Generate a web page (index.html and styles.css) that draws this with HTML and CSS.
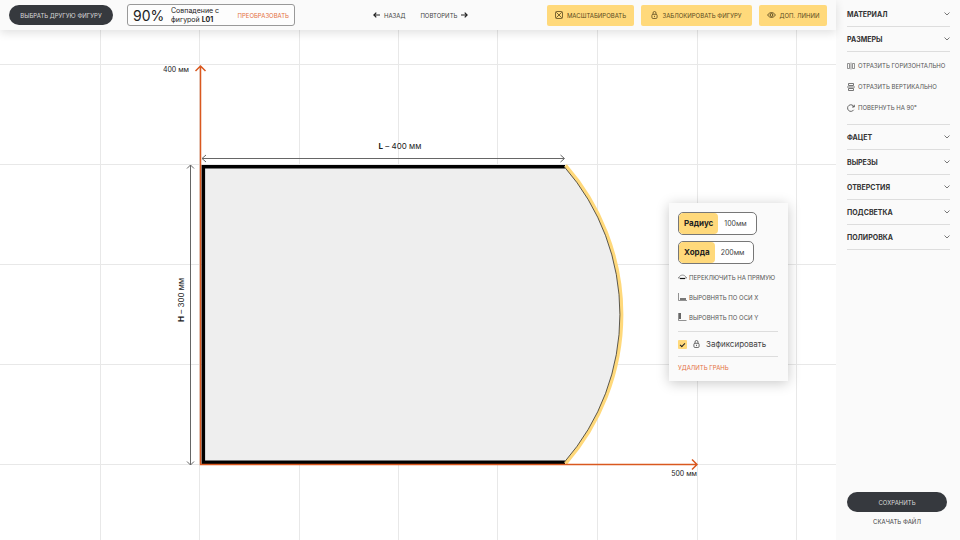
FILE: index.html
```html
<!DOCTYPE html>
<html lang="ru">
<head>
<meta charset="utf-8">
<title>Редактор фигуры</title>
<link rel="stylesheet" href="styles.css">
</head>
<body>
<main class="workspace">
  <header class="toolbar">
    <button class="pill pill-choose">ВЫБРАТЬ ДРУГУЮ ФИГУРУ</button>
    <div class="match">
      <span class="match-value">90%</span>
      <span class="match-text">Совпадение с<br>фигурой <b>L01</b></span>
      <button class="link-accent">ПРЕОБРАЗОВАТЬ</button>
    </div>
    <div class="history">
      <button class="plain"><svg width="7" height="6" viewBox="0 0 7 6"><path d="M7 3H1M3.3.6.9 3l2.4 2.4" fill="none" stroke="#222" stroke-width="1.2"/></svg>НАЗАД</button>
      <button class="plain">ПОВТОРИТЬ<svg width="7" height="6" viewBox="0 0 7 6"><path d="M0 3h6M3.7.6 6.1 3 3.7 5.4" fill="none" stroke="#222" stroke-width="1.2"/></svg></button>
    </div>
    <div class="tools">
      <button class="tool tool-scale"><svg width="8" height="8" viewBox="0 0 8 8"><rect x=".5" y=".5" width="7" height="7" rx="1" fill="none" stroke="#5a4a20" stroke-width=".8"/><path d="M1.200 1.200l5.600 5.600M6.800 1.200 1.200 6.800" fill="none" stroke="#5a4a20" stroke-width=".8"/></svg>МАСШТАБИРОВАТЬ</button>
      <button class="tool tool-lock"><svg width="7" height="8" viewBox="0 0 7 8"><rect x=".9" y="3.3" width="5.2" height="4.2" rx="1.2" fill="none" stroke="#5a4a20" stroke-width=".8"/><path d="M2 3.3V2a1.5 1.5 0 0 1 3 0v1.3M3.5 4.8v1.3" fill="none" stroke="#5a4a20" stroke-width=".8"/></svg>ЗАБЛОКИРОВАТЬ ФИГУРУ</button>
      <button class="tool tool-lines"><svg width="9" height="8" viewBox="0 0 9 8"><path d="M.5 4Q4.5-1 8.5 4 4.5 9 .5 4z" fill="none" stroke="#5a4a20" stroke-width=".9"/><circle cx="4.5" cy="4" r="1.4" fill="none" stroke="#5a4a20"/></svg>ДОП. ЛИНИИ</button>
    </div>
  </header>

  <section class="canvas">
    <svg class="drawing" width="100%" height="100%">
      <g class="grid">
        <line x1="0" x2="100%" y1="34.5" y2="34.5"/><line x1="0" x2="100%" y1="134.5" y2="134.5"/><line x1="0" x2="100%" y1="234.5" y2="234.5"/><line x1="0" x2="100%" y1="334.5" y2="334.5"/><line x1="0" x2="100%" y1="434.5" y2="434.5"/>
        <line x1="100.5" x2="100.5" y1="0" y2="100%"/><line x1="199.5" x2="199.5" y1="0" y2="100%"/><line x1="299.5" x2="299.5" y1="0" y2="100%"/><line x1="398.5" x2="398.5" y1="0" y2="100%"/><line x1="497.5" x2="497.5" y1="0" y2="100%"/><line x1="597.5" x2="597.5" y1="0" y2="100%"/><line x1="697.5" x2="697.5" y1="0" y2="100%"/><line x1="796.5" x2="796.5" y1="0" y2="100%"/>
      </g>
      <path d="M203 136H565A226 226 0 0 1 565 433H203z" fill="#eee"/>
      <path d="M565 136.8H203.3V432.3H565" fill="none" stroke="#000" stroke-width="3.6"/>
      <path d="M565.500 135.500A226 226 0 0 1 565.500 433.500" fill="none" stroke="#ffd97b" stroke-width="3.6"/>
      <path d="M564.500 137A224 224 0 0 1 564.500 432" fill="none" stroke="#333" stroke-width=".8"/>
      <path d="M200.5 36V434.5H697M195.5 41l5-5 5 5M692 429.5l5 5-5 5" fill="none" stroke="#d9581f" stroke-width="1.5"/>
      <path d="M202 128.5H564M206 125l-4 3.500 4 3.500M560.500 125l4 3.500-4 3.500M190.500 135V435M187 138.500l3.500-3.500 3.500 3.500M187 431.500l3.500 3.500 3.500-3.500" fill="none" stroke="#666" stroke-width="1"/>
      <text class="axis" x="189" y="42" text-anchor="end">400 мм</text>
      <text class="axis" x="697" y="446" text-anchor="end">500 мм</text>
      <text class="size" x="400" y="119" text-anchor="middle"><tspan class="strong">L</tspan> – 400 мм</text>
      <text class="size" transform="translate(184 270) rotate(-90)" text-anchor="middle"><tspan class="strong">H</tspan> – 300 мм</text>
    </svg>

    <form class="popup">
      <div class="field"><label for="radius">Радиус</label><input id="radius" class="value" value="100мм"></div>
      <div class="field"><label for="chord">Хорда</label><input id="chord" class="value" value="200мм"></div>
      <button type="button" class="action"><svg width="9" height="8" viewBox="0 0 9 8"><path d="M1 4.500C2 1.300 7 1.300 8 4.500" fill="none" stroke="#777" stroke-width=".8"/><path d="M1.800 5.500h5.400" stroke="#111" stroke-width="1.200"/><path d="M0 4.800h1.500M7.500 4.800H9" stroke="#777"/></svg>ПЕРЕКЛЮЧИТЬ НА ПРЯМУЮ</button>
      <button type="button" class="action"><svg width="9" height="8" viewBox="0 0 9 8"><path d="M.5 0v7.500H9" fill="none" stroke="#777" stroke-width=".8"/><path d="M2 5h6v2H2z" fill="#777"/></svg>ВЫРОВНЯТЬ ПО ОСИ X</button>
      <button type="button" class="action"><svg width="9" height="8" viewBox="0 0 9 8"><path d="M.5 0v7.500H8.500" fill="none" stroke="#777" stroke-width=".8"/><path d="M1 0h2v6H1z" fill="#666"/></svg>ВЫРОВНЯТЬ ПО ОСИ Y</button>
      <div class="fix">
        <input type="checkbox" id="fix" checked>
        <label for="fix"><svg width="7" height="8" viewBox="0 0 7 8"><rect x=".9" y="3.300" width="5.200" height="4.200" rx="1.200" fill="none" stroke="#444" stroke-width=".8"/><path d="M2 3.300V2a1.500 1.500 0 0 1 3 0v1.300M3.500 4.800v1.300" fill="none" stroke="#444" stroke-width=".8"/></svg>Зафиксировать</label>
      </div>
      <button type="button" class="link-accent delete">УДАЛИТЬ ГРАНЬ</button>
    </form>
  </section>
</main>

<aside class="sidebar">
  <button class="section">МАТЕРИАЛ<svg class="chevron" viewBox="0 0 6 4"><path d="M.5.5 3 3 5.500.5"/></svg></button>
  <button class="section">РАЗМЕРЫ<svg class="chevron" viewBox="0 0 6 4"><path d="M.5.5 3 3 5.500.5"/></svg></button>
  <div class="transforms">
    <button class="action"><svg width="8" height="8" viewBox="0 0 8 8"><path d="M.5 1.500h2v5h-2zM5.500 1.500h2v5h-2zM4 .5v7" fill="none" stroke="#666" stroke-width=".7"/></svg>ОТРАЗИТЬ ГОРИЗОНТАЛЬНО</button>
    <button class="action"><svg width="8" height="8" viewBox="0 0 8 8"><path d="M1.500.5h5v2h-5zM1.500 5.500h5v2h-5zM0 4h8" fill="none" stroke="#555" stroke-width=".8"/></svg>ОТРАЗИТЬ ВЕРТИКАЛЬНО</button>
    <button class="action"><svg width="8" height="8" viewBox="0 0 8 8"><path d="M6.700 5.800A3.300 3.300 0 1 1 7 3M7.300.8V3H5" fill="none" stroke="#444" stroke-width=".8"/></svg>ПОВЕРНУТЬ НА 90°</button>
  </div>
  <button class="section">ФАЦЕТ<svg class="chevron" viewBox="0 0 6 4"><path d="M.5.5 3 3 5.500.5"/></svg></button>
  <button class="section">ВЫРЕЗЫ<svg class="chevron" viewBox="0 0 6 4"><path d="M.5.5 3 3 5.500.5"/></svg></button>
  <button class="section">ОТВЕРСТИЯ<svg class="chevron" viewBox="0 0 6 4"><path d="M.5.5 3 3 5.500.5"/></svg></button>
  <button class="section">ПОДСВЕТКА<svg class="chevron" viewBox="0 0 6 4"><path d="M.5.5 3 3 5.500.5"/></svg></button>
  <button class="section">ПОЛИРОВКА<svg class="chevron" viewBox="0 0 6 4"><path d="M.5.5 3 3 5.500.5"/></svg></button>
  <div class="save">
    <button class="pill">СОХРАНИТЬ</button>
    <button class="plain download">СКАЧАТЬ ФАЙЛ</button>
  </div>
</aside>
</body>
</html>
```
FILE: styles.css
```css
* { box-sizing: border-box; }

body {
  display: flex;
  min-height: 100vh;
  margin: 0;
  background: #fff;
  color: #333;
  font: 6px/9px Inter, "Open Sans", sans-serif;
}

button, input {
  margin: 0;
  padding: 0;
  border: 0;
  background: none;
  color: inherit;
  font: inherit;
}

button { cursor: pointer; white-space: nowrap; }
svg { flex: none; }

.workspace { display: flex; flex: 1; flex-direction: column; min-width: 0; }

.toolbar {
  position: relative;
  z-index: 1;
  display: flex;
  align-items: center;
  height: 30px;
  padding: 0 9px;
  background: #fafafa;
  box-shadow: 0 3px 10px rgba(0, 0, 0, .12);
}

.pill {
  height: 20px;
  border-radius: 10px;
  background: #36393e;
  color: #d8d8d8;
}

.pill-choose { width: 104px; }

.match {
  display: flex;
  align-items: center;
  width: 168px;
  height: 22px;
  margin-left: 14px;
  padding: 0 5px;
  border: 1px solid #999;
  border-radius: 3px;
  background: #fdfdfd;
}

.match-value { width: 38px; color: #222; font-size: 14px; }
.match-text { color: #222; font-size: 7px; white-space: nowrap; }
.link-accent { color: #e4703f; }
.match .link-accent { margin-left: auto; }

.history { display: flex; gap: 15px; margin-left: 78px; }
.plain { display: flex; align-items: center; gap: 4px; color: #444; }

.tools { display: flex; gap: 7px; margin-left: auto; }

.tool {
  display: flex;
  align-items: center;
  justify-content: center;
  gap: 4px;
  height: 21px;
  border-radius: 2px;
  background: #ffd97b;
  color: #5a4a20;
}

.tool-scale { width: 87px; }
.tool-lock { width: 111px; }
.tool-lines { width: 68px; }

.canvas { position: relative; flex: 1; overflow: hidden; }
.drawing { position: absolute; inset: 0; }
.grid { stroke: #e8e8e8; stroke-width: 1; }
.axis { fill: #222; font-size: 7px; }
.size { fill: #222; font-size: 8px; }
.strong { font-weight: 700; }

.popup {
  position: absolute;
  top: 173px;
  left: 669px;
  display: flex;
  flex-direction: column;
  align-items: flex-start;
  width: 119px;
  padding: 9px 10px 9px 9px;
  background: #fafafa;
  box-shadow: 0 2px 12px rgba(0, 0, 0, .22);
}

.field {
  display: flex;
  height: 23px;
  margin-bottom: 6px;
  overflow: hidden;
  border: 1px solid #777;
  border-radius: 5px;
  background: #fff;
  font-size: 7px;
}

.field label {
  display: flex;
  align-items: center;
  padding: 0 5px;
  border-radius: 4px;
  background: #ffd97b;
  color: #222;
  font-size: 8px;
  font-weight: 700;
}

.value { width: 38px; padding-left: 6px; color: #444; }

.action {
  display: flex;
  align-items: center;
  gap: 3px;
  color: #555;
}

.popup .action { height: 20px; gap: 2px; }
.popup .field + .action { margin-top: -3px; }

.fix {
  display: flex;
  align-items: center;
  align-self: stretch;
  gap: 6px;
  height: 26px;
  margin-top: 4px;
  border: solid #ddd;
  border-width: 1px 0;
}

.fix label { display: flex; align-items: center; gap: 6px; color: #444; font-size: 8px; }

.fix input {
  display: grid;
  place-items: center;
  width: 9px;
  height: 9px;
  border-radius: 1px;
  appearance: none;
  background: #ffd97b;
}

.fix input:checked::after {
  width: 4px;
  height: 2px;
  border: solid #222;
  border-width: 0 0 1px 1px;
  content: "";
  transform: rotate(-45deg);
}

.delete { margin-top: 6px; }

.sidebar {
  display: flex;
  flex: none;
  flex-direction: column;
  width: 124px;
  padding: 2px 10px 14px 11px;
  background: #fafafa;
}

.section {
  display: flex;
  align-items: center;
  justify-content: space-between;
  height: 25px;
  border-bottom: 1px solid #ddd;
  color: #333;
  font-size: 7px;
  font-weight: 700;
}

.chevron { width: 6px; height: 4px; fill: none; stroke: #555; stroke-width: .8; }

.transforms {
  display: flex;
  flex-direction: column;
  align-items: flex-start;
  padding: 3px 0 6px;
  border-bottom: 1px solid #ddd;
}

.transforms .action { height: 21px; }

.save { display: flex; flex-direction: column; gap: 5px; width: 100px; margin-top: auto; }
.download { justify-content: center; }
```
